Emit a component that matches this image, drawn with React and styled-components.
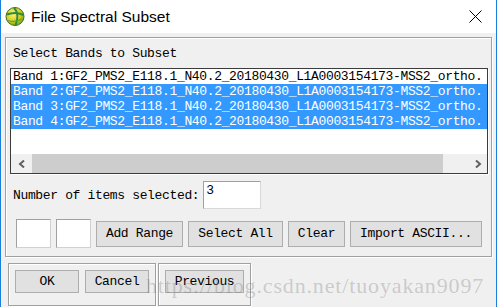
import React from 'react';
import styled, { createGlobalStyle } from 'styled-components';

const bands = [1, 2, 3, 4].map(
  (n) => `Band ${n}:GF2_PMS2_E118.1_N40.2_20180430_L1A0003154173-MSS2_ortho.`
);
const selected = [false, true, true, true];

const GlobalStyle = createGlobalStyle`
  html, body {
    margin: 0;
    padding: 0;
    background: #f0f0f0;
  }
  body {
    font-family: "Liberation Mono", monospace;
  }
`;

const Window = styled.div`
  position: relative;
  width: 497px;
  height: 307px;
  box-sizing: border-box;
  border-left: 1px solid #1a7fdc;
  border-right: 1px solid #1a7fdc;
  background: #f0f0f0;
  overflow: hidden;
  display: flex;
  flex-direction: column;
`;

const TitleBar = styled.div`
  flex: none;
  height: 33px;
  background: #fff;
  display: flex;
  align-items: center;
  padding: 0 14px 0 4px;
`;

const Title = styled.div`
  flex: 1;
  margin-left: 6px;
  font-family: "Liberation Sans", Arial, sans-serif;
  font-size: 15.5px;
  color: #000;
`;

const Content = styled.div`
  padding: 4px 4px 0 4px;
  display: flex;
  flex-direction: column;
`;

const Group = styled.div`
  border: 1px solid #a0a0a0;
  box-shadow: inset 1px 1px 0 #fff, 1px 1px 0 #fff;
  box-sizing: border-box;
`;

const MainGroup = styled(Group)`
  padding: 8px 3px 8px 4px;
`;

const Text = styled.div`
  font-size: 13px;
  letter-spacing: -0.35px;
  line-height: 15px;
  color: #000;
  white-space: nowrap;
`;

const GroupLabel = styled(Text)`
  margin-left: 3px;
`;

const ListBox = styled.div`
  margin-top: 7px;
  height: 106px;
  box-sizing: border-box;
  border: 1px solid #3c3c3c;
  background: #fff;
  display: flex;
  flex-direction: column;
  box-shadow: 1px 1px 0 #fff;
`;

const Rows = styled.div`
  flex: 1;
  overflow: hidden;
`;

const Row = styled(Text)`
  height: 15px;
  padding-left: 2px;
  background: ${(p) => (p.$selected ? '#3399ff' : 'transparent')};
  color: ${(p) => (p.$selected ? '#fff' : '#000')};
  overflow: hidden;
`;

const ScrollBar = styled.div`
  flex: none;
  height: 19px;
  background: #f0f0f0;
  display: flex;
  align-items: stretch;
`;

const ScrollButton = styled.div`
  width: ${(p) => p.$w}px;
  display: flex;
  align-items: center;
  justify-content: center;
`;

const Thumb = styled.div`
  width: 411px;
  background: #cdcdcd;
`;

const Track = styled.div`
  flex: 1;
`;

const NumberRow = styled.div`
  margin-top: 7px;
  padding-left: 3px;
  display: flex;
  align-items: center;
`;

const Field = styled(Text)`
  margin-left: 4px;
  width: 58px;
  height: 28px;
  box-sizing: border-box;
  border: 1px solid #a0a0a0;
  border-right-color: #d8d8d8;
  border-bottom-color: #d8d8d8;
  background: #fff;
  padding: 1px 2px;
`;

const ButtonRow = styled.div`
  margin-top: 10px;
  padding-left: 6px;
  display: flex;
  align-items: center;
  gap: 5px;
`;

const Blank = styled.div`
  width: 35px;
  height: 29px;
  box-sizing: border-box;
  border: 1px solid #a0a0a0;
  border-right-color: #d0d0d0;
  border-bottom-color: #d0d0d0;
  background: #fff;
`;

const Button = styled.div`
  width: ${(p) => p.$w}px;
  height: ${(p) => p.$h || 26}px;
  box-sizing: border-box;
  border: 1px solid #adadad;
  background: #e1e1e1;
  display: flex;
  align-items: center;
  justify-content: center;
  font-size: 13px;
  letter-spacing: -0.35px;
  color: #000;
  white-space: nowrap;
`;

const BottomRow = styled.div`
  margin-top: 6px;
  margin-left: 3px;
  display: flex;
  gap: 2px;
`;

const ButtonGroup = styled(Group)`
  width: ${(p) => p.$w}px;
  padding: 6px 6px 12px;
  display: flex;
  gap: 6px;
`;

const Watermark = styled.div`
  position: absolute;
  left: 145px;
  top: 273px;
  font-family: "Liberation Serif", "Times New Roman", serif;
  font-size: 22px;
  letter-spacing: 0.85px;
  line-height: 26px;
  color: rgba(110, 110, 110, 0.3);
  white-space: nowrap;
  pointer-events: none;
`;

const GlobeIcon = () => (
  <svg width="20" height="21" viewBox="0 0 20 21">
    <defs>
      <radialGradient id="gl" cx="0.4" cy="0.35" r="0.7">
        <stop offset="0" stopColor="#fff27a" />
        <stop offset="0.55" stopColor="#d9d020" />
        <stop offset="1" stopColor="#6fa516" />
      </radialGradient>
    </defs>
    <circle cx="10" cy="10.5" r="9" fill="url(#gl)" stroke="#3c6e2a" strokeWidth="1" />
    <path d="M2 8.5 C6 6.5 13 6 18.5 9" fill="none" stroke="#2f8a3a" strokeWidth="2" />
    <path d="M9 1.8 C13 6 13 13 10.5 19.3" fill="none" stroke="#2f8a3a" strokeWidth="2" />
    <path d="M3 14.5 C7 16 12 15.5 17 13" fill="none" stroke="#5aa340" strokeWidth="1.2" />
  </svg>
);

const CloseIcon = () => (
  <svg width="13" height="13" viewBox="0 0 13 13">
    <path d="M0.5 0.5 L12.5 12.5 M12.5 0.5 L0.5 12.5" stroke="#000" strokeWidth="1" />
  </svg>
);

const Chevron = ({ dir }) => (
  <svg width="8" height="8" viewBox="0 0 8 8">
    <path
      d={dir === 'left' ? 'M6 0.5 L2 4 L6 7.5' : 'M2 0.5 L6 4 L2 7.5'}
      fill="none"
      stroke="#606060"
      strokeWidth="2"
    />
  </svg>
);

const App = () => {
  return (
    <Window>
      <GlobalStyle />
      <TitleBar>
        <GlobeIcon />
        <Title>File Spectral Subset</Title>
        <CloseIcon />
      </TitleBar>
      <Content>
        <MainGroup>
          <GroupLabel>Select Bands to Subset</GroupLabel>
          <ListBox>
            <Rows>
              {bands.map((b, i) => (
                <Row key={b + i} $selected={selected[i]}>
                  {b}
                </Row>
              ))}
            </Rows>
            <ScrollBar>
              <ScrollButton $w={21}>
                <Chevron dir="left" />
              </ScrollButton>
              <Thumb />
              <Track />
              <ScrollButton $w={19}>
                <Chevron dir="right" />
              </ScrollButton>
            </ScrollBar>
          </ListBox>
          <NumberRow>
            <Text>Number of items selected:</Text>
            <Field>3</Field>
          </NumberRow>
          <ButtonRow>
            <Blank />
            <Blank />
            <Button $w={87}>Add Range</Button>
            <Button $w={95}>Select All</Button>
            <Button $w={57}>Clear</Button>
            <Button $w={132}>Import ASCII...</Button>
          </ButtonRow>
        </MainGroup>
        <BottomRow>
          <ButtonGroup $w={148}>
            <Button $w={64} $h={23}>OK</Button>
            <Button $w={64} $h={23}>Cancel</Button>
          </ButtonGroup>
          <ButtonGroup $w={93}>
            <Button $w={79} $h={23}>Previous</Button>
          </ButtonGroup>
        </BottomRow>
      </Content>
      <Watermark>https://blog.csdn.net/tuoyakan9097</Watermark>
    </Window>
  );
};

export default App;
